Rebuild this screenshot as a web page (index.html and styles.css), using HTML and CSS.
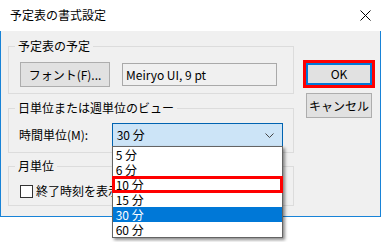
FILE: index.html
```html
<!DOCTYPE html>
<html lang="ja">
<head>
	<meta charset="utf-8">
	<title>予定表の書式設定</title>
	<link rel="stylesheet" href="styles.css">
</head>
<body>
	<div class="window">
		<div class="titlebar">
			<span class="title">予定表の書式設定</span>
			<svg class="close" width="11" height="11" viewBox="0 0 11 11">
				<path d="M0.5 0.5 L10.5 10.5 M10.5 0.5 L0.5 10.5" stroke="#000" stroke-width="1" fill="none"/>
			</svg>
		</div>
		<div class="dialog">
			<div class="groups">
				<fieldset class="group group-schedule">
					<legend>予定表の予定</legend>
					<div class="row">
						<button class="btn btn-font">フォント(F)...</button>
						<div class="font-name">Meiryo UI, 9 pt</div>
					</div>
				</fieldset>
				<fieldset class="group group-day">
					<legend>日単位または週単位のビュー</legend>
					<div class="row">
						<span class="field-label">時間単位(M):</span>
						<div class="combo">
							<span class="combo-value">30 分</span>
							<svg class="chevron" width="9" height="5" viewBox="0 0 9 5">
								<path d="M0.5 0.5 L4.5 4.5 L8.5 0.5" stroke="#444" stroke-width="1" fill="none"/>
							</svg>
							<ul class="combo-list">
								<li>5 分</li>
								<li>6 分</li>
								<li class="marked">10 分</li>
								<li>15 分</li>
								<li class="selected">30 分</li>
								<li>60 分</li>
							</ul>
						</div>
					</div>
				</fieldset>
				<fieldset class="group group-month">
					<legend>月単位</legend>
					<div class="check">
						<span class="box"></span>
						<span>終了時刻を表示する(E)</span>
					</div>
				</fieldset>
			</div>
			<div class="actions">
				<button class="btn btn-ok">OK</button>
				<button class="btn btn-cancel">キャンセル</button>
			</div>
		</div>
	</div>
</body>
</html>
```

FILE: styles.css
```css
html, body {
	height: 242px;
}
body {
	margin: 0;
	background: #fff;
	font-family: "Noto Sans CJK JP", "Noto Sans", sans-serif;
	font-size: 12px;
	color: #000;
	overflow: hidden;
}
.window {
	width: 381px;
}
.titlebar {
	height: 31px;
	background: #fff;
	display: flex;
	align-items: center;
	padding: 0 10px;
	box-sizing: border-box;
}
.title {
	flex: 1;
	line-height: 16px;
	margin-top: -2px;
}
.close {
	margin-top: -1px;
}
.dialog {
	display: flex;
	background: #f0f0f0;
	border: 1px solid #1883d7;
	border-top: none;
	height: 186px;
	box-sizing: border-box;
	padding: 7px 0 0 7px;
}
.groups {
	width: 286px;
}
.group {
	margin: 0;
	border: 1px solid #dcdcdc;
	padding: 7px 10px 5px 10px;
	box-sizing: border-box;
	width: 286px;
	min-width: 0;
}
.group legend {
	padding: 0 3px;
	margin-left: -4px;
	line-height: 16px;
}
.group-schedule {
	padding-top: 8px;
	padding-bottom: 6px;
}
.group-day {
	margin-top: 6px;
}
.group-month {
	margin-top: 5px;
	padding-top: 9px;
	padding-bottom: 6px;
}
.row {
	display: flex;
	align-items: center;
}
.btn {
	font-family: "Noto Sans CJK JP", "Noto Sans", sans-serif;
	font-size: 12px;
	color: #000;
	background: #e1e1e1;
	border: 1px solid #adadad;
	padding: 0;
	margin: 0;
	line-height: 16px;
}
.btn-font {
	width: 90px;
	height: 25px;
	margin-left: 1px;
}
.font-name {
	width: 155px;
	height: 23px;
	margin-left: 12px;
	border: 1px solid #a9a9a9;
	box-sizing: border-box;
	background: #f0f0f0;
	padding-left: 3px;
	line-height: 21px;
}
.field-label {
	width: 93px;
	line-height: 16px;
}
.combo {
	position: relative;
	width: 172px;
	height: 24px;
	box-sizing: border-box;
	border: 1px solid #0063b1;
	background: #cce4f7;
	display: flex;
	align-items: center;
	padding: 0 4px;
}
.combo-value {
	flex: 1;
	line-height: 16px;
}
.chevron {
	margin-right: 4px;
}
.combo-list {
	position: absolute;
	left: -1px;
	top: 22px;
	width: 171px;
	margin: 0;
	padding: 0;
	list-style: none;
	background: #fff;
	border: 1px solid #646464;
	box-sizing: border-box;
	box-shadow: 2px 2px 3px rgba(0, 0, 0, 0.45);
	z-index: 2;
}
.combo-list li {
	height: 15px;
	line-height: 15px;
	padding-left: 3px;
}
.combo-list li.selected {
	background: #0078d7;
	color: #fff;
}
.combo-list li.marked {
	outline: 3px solid #f00;
	outline-offset: -2px;
}
.check {
	display: flex;
	align-items: center;
	line-height: 16px;
	white-space: nowrap;
}
.check .box {
	width: 13px;
	height: 13px;
	box-sizing: border-box;
	border: 1px solid #333;
	background: #fff;
	margin: 0 3px 0 1px;
}
.actions {
	display: flex;
	flex-direction: column;
	margin-left: 12px;
	padding-top: 25px;
}
.btn-ok {
	width: 66px;
	height: 22px;
	border: 2px solid #0078d7;
	outline: 3px solid #f00;
}
.btn-cancel {
	width: 66px;
	height: 25px;
	margin-top: 8px;
}
```
